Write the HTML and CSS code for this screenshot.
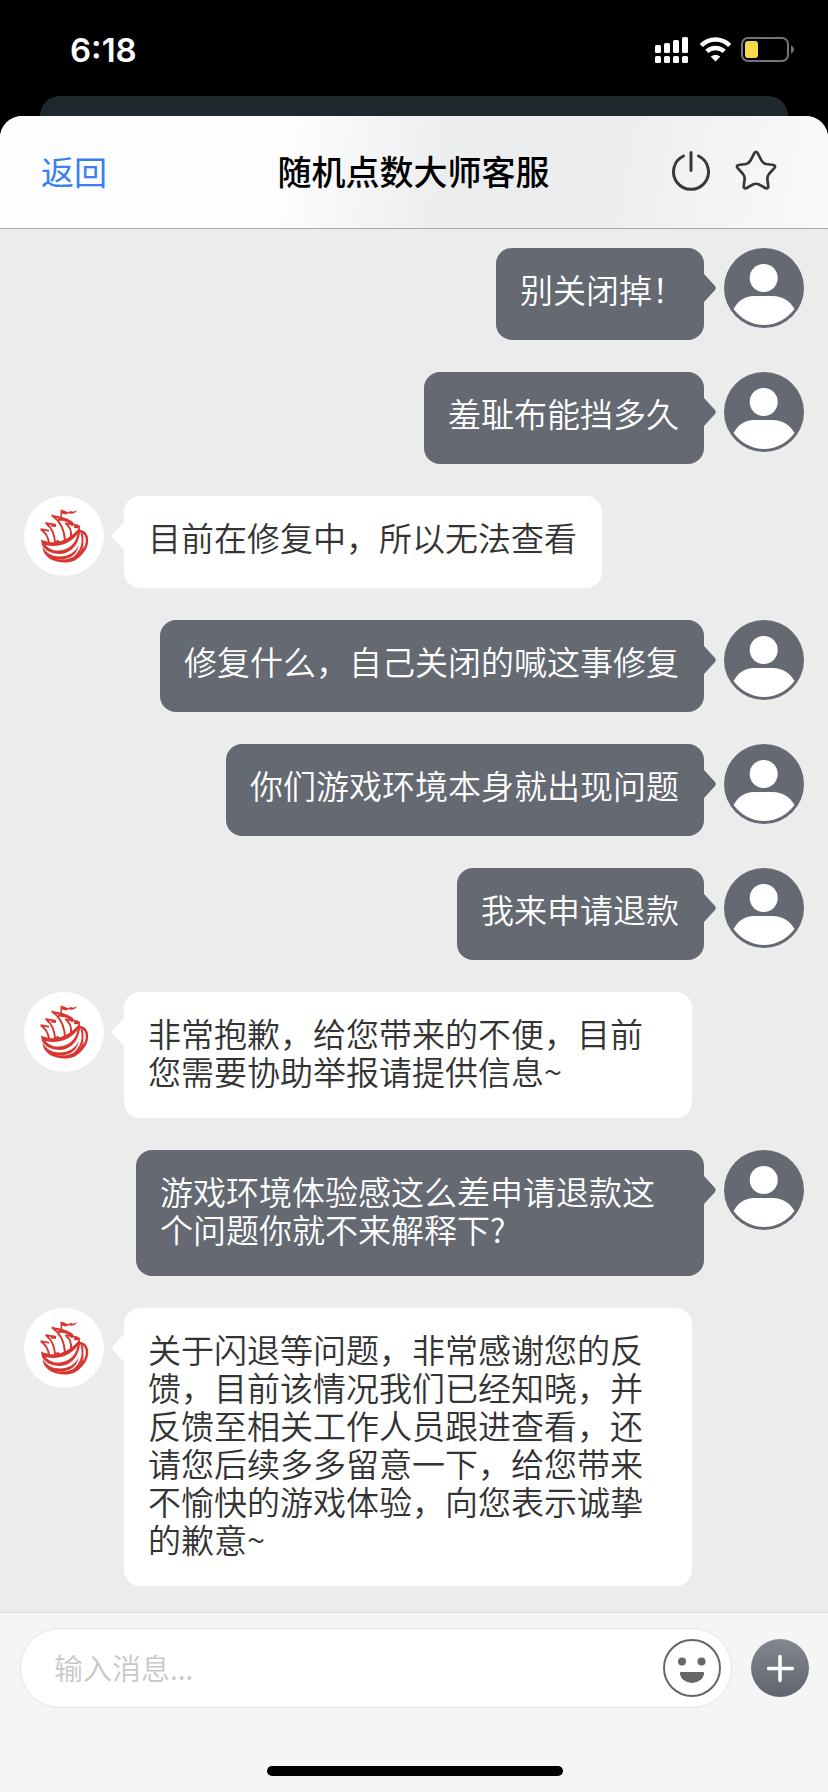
FILE: index.html
```html
<!DOCTYPE html>
<html lang="zh-CN">
<head>
<meta charset="utf-8">
<meta name="viewport" content="width=device-width, initial-scale=1">
<title>随机点数大师客服</title>
<link rel="stylesheet" href="styles.css">
</head>
<body>
<svg class="sprite" aria-hidden="true">
  <symbol id="user" viewBox="0 0 80 80">
    <circle cx="40" cy="40" r="40" fill="#656972"/>
    <circle cx="39.700" cy="30" r="14" fill="#fff"/>
    <path d="M9.500 61C14 53 21 48 30 48h19c9 0 17 5 21.500 13C63 71 52 77 40 77S17 71 9.500 61z" fill="#fff"/>
  </symbol>
  <symbol id="ship" viewBox="0 0 80 80">
    <circle cx="40" cy="40" r="40" fill="#fff"/>
    <g fill="#d93530">
      <path d="M36.500 13.500l5 1.500 2 1.200 3.500-1.200 2 .8 4.500-1.500-3 2.800-3 .7-2.500-.6-3.500 1.300-3.500-.9V21h-1.500z"/>
      <path d="M17 43.500C30 50 45 45 56 31c1 14-7 26.500-20 27-9 0-15-3.500-18-9zm4.500 5.500c3 3.500 8 6 14 5.500 10-.8 16.500-7.500 18-16.500-7 9.500-19 14-32 11z" fill-rule="evenodd"/>
      <path d="M18.500 51c4 6.500 10 9.500 17.500 9.500 9 0 15-4.500 19-11-2.500 9-9 14-19 14-4.500 0-8.500-1-12-3.500 5 3.500 11 4 16 3.500 11-1 18-7 19.500-15.500C60.500 60 52 66.500 41 66.500 28 66.500 19 60 18.500 51z"/>
    </g>
    <g fill="none" stroke="#d93530" stroke-width="1.900" stroke-linejoin="round">
      <path d="M27.500 19.300C35 22 43 21.500 49 27.500M28 19.500C36 25 40.500 34 41 45M34 23.500C40 23.500 45 25 48.500 28"/>
      <path d="M21.500 27C25 28 28.500 27.800 32 29M22 27.200C28 32 30.500 38 31 46M27 29.500l5 .5"/>
      <path d="M16.500 33.200C20 34 22.500 33.800 25 34.800M17 33.500C22.500 37.500 24.500 41.500 25 47M30.500 46l4.500-1"/>
      <path d="M41 27.500C47 27.500 52 28.500 56 31M42 28C46.500 31 47.500 35.500 47 41M48 26v4M50 31l5.500.5"/>
      <path d="M54.500 35C61 35 63.500 40 63 45.500 62 55 54 62.500 44 64.500" stroke-width="2.500"/>
      <path d="M57.500 37C60 46 58 55 49.500 62"/>
    </g>
  </symbol>
</svg>

<div class="phone">
  <div class="status">
    <span class="status__time">6:18</span>
    <svg class="status__icons" viewBox="0 0 142 30" aria-hidden="true">
      <g fill="#fff">
        <rect x="1" y="10" width="6" height="8" rx="1.500"/><rect x="10" y="8" width="6" height="10" rx="1.500"/>
        <rect x="19" y="5" width="6" height="13" rx="1.500"/><rect x="28" y="2" width="6" height="16" rx="1.500"/>
        <rect x="1" y="21" width="6" height="7" rx="1.500"/><rect x="10" y="21" width="6" height="7" rx="1.500"/>
        <rect x="19" y="21" width="6" height="7" rx="1.500"/><rect x="28" y="21" width="6" height="7" rx="1.500"/>
        <path d="M61.500 20c1.900 0 3.500.7 4.700 1.700L61.500 26.500l-4.700-4.800c1.200-1 2.800-1.700 4.700-1.700z"/>
      </g>
      <g fill="none" stroke="#fff" stroke-width="4.500">
        <path d="M47.300 10.500c8-8 20.400-8 28.400 0"/><path d="M52.800 16.300c5-4.500 12.400-4.500 17.400 0"/>
      </g>
      <rect x="88" y="3" width="46" height="23" rx="6" fill="none" stroke="#747474" stroke-width="2"/>
      <rect x="91" y="6" width="13" height="17" rx="3" fill="#f8d84a"/>
      <path d="M137 10.500c4 1.500 4 6.500 0 8z" fill="#747474"/>
    </svg>
  </div>
  <div class="backdrop"></div>
  <main class="sheet">
    <header class="bar">
      <button class="bar__back" type="button">返回</button>
      <h1 class="bar__title">随机点数大师客服</h1>
      <div class="bar__actions">
        <button class="icon" type="button" aria-label="关闭">
          <svg viewBox="0 0 44 44" fill="none" stroke="#38383a" stroke-width="3" stroke-linecap="round"><path d="M22 3.500v18M14.500 7a17.500 17.500 0 1 0 15 0"/></svg>
        </button>
        <button class="icon" type="button" aria-label="收藏">
          <svg viewBox="0 0 44 44" fill="none" stroke="#38383a" stroke-width="2.700" stroke-linejoin="round"><path d="M20.500 3.800Q22 1.800 23.500 3.800L27.500 11.500Q29 14.300 32 15L39.500 16Q42 16.800 40.500 18.800L35 25Q33 27.500 33.400 30.500L34.300 37.500Q34.200 40 31.800 39.200L25 35.500Q22 34 19 35.500L12.200 39.200Q9.800 40 9.700 37.500L10.600 30.500Q11 27.500 9 25L3.500 18.800Q2 16.800 4.500 16L12 15Q15 14.300 16.500 11.500Z"/></svg>
        </button>
      </div>
    </header>

    <section class="chat" aria-label="聊天记录">
      <div class="msg msg--me"><p class="bubble bubble--exclaim">别关闭掉！</p><svg class="avatar"><use href="#user"/></svg></div>
      <div class="msg msg--me"><p class="bubble">羞耻布能挡多久</p><svg class="avatar"><use href="#user"/></svg></div>
      <div class="msg"><svg class="avatar"><use href="#ship"/></svg><p class="bubble">目前在修复中，所以无法查看</p></div>
      <div class="msg msg--me"><p class="bubble">修复什么，自己关闭的喊这事修复</p><svg class="avatar"><use href="#user"/></svg></div>
      <div class="msg msg--me"><p class="bubble">你们游戏环境本身就出现问题</p><svg class="avatar"><use href="#user"/></svg></div>
      <div class="msg msg--me"><p class="bubble">我来申请退款</p><svg class="avatar"><use href="#user"/></svg></div>
      <div class="msg"><svg class="avatar"><use href="#ship"/></svg><p class="bubble">非常抱歉，给您带来的不便，目前您需要协助举报请提供信息~</p></div>
      <div class="msg msg--me"><p class="bubble">游戏环境体验感这么差申请退款这个问题你就不来解释下?</p><svg class="avatar"><use href="#user"/></svg></div>
      <div class="msg"><svg class="avatar"><use href="#ship"/></svg><p class="bubble">关于闪退等问题，非常感谢您的反馈，目前该情况我们已经知晓，并反馈至相关工作人员跟进查看，还请您后续多多留意一下，给您带来不愉快的游戏体验，向您表示诚挚的歉意~</p></div>
    </section>

    <footer class="composer">
      <form class="composer__row">
        <div class="field">
          <input class="field__input" type="text" placeholder="输入消息..." aria-label="输入消息">
          <button class="round" type="button" aria-label="表情">
            <svg viewBox="0 0 58 58"><circle cx="29" cy="29" r="28" fill="#fff" stroke="#666" stroke-width="2"/><circle cx="19" cy="22.500" r="4" fill="#666"/><circle cx="38.500" cy="22.500" r="4" fill="#666"/><path d="M18 33h22q1 0 1 1a12 10 0 0 1-24 0q0-1 1-1z" fill="#666"/></svg>
          </button>
        </div>
        <button class="round" type="button" aria-label="更多">
          <svg viewBox="0 0 58 58"><defs><linearGradient id="plus" x2="0" y2="1"><stop stop-color="#83878f"/><stop offset="1" stop-color="#60646e"/></linearGradient></defs><circle cx="29" cy="29" r="29" fill="url(#plus)"/><path d="M29 17.500v24M17.500 29.500h24" stroke="#fff" stroke-width="3.500" stroke-linecap="round"/></svg>
        </button>
      </form>
      <div class="home"></div>
    </footer>
  </main>
</div>
</body>
</html>
```

FILE: styles.css
```css
* { box-sizing: border-box; }

body {
  margin: 0;
  background: #000;
  font-family: "Noto Sans CJK SC", sans-serif;
}

button {
  padding: 0;
  border: 0;
  background: none;
  font: inherit;
  cursor: pointer;
}

svg { display: block; }

.sprite { position: absolute; width: 0; height: 0; }

.phone {
  display: flex;
  flex-direction: column;
  min-height: 100vh;
}

/* Status bar */
.status {
  display: flex;
  align-items: center;
  justify-content: space-between;
  height: 96px;
  padding: 4px 32px 0 70px;
}

.status__time {
  color: #fff;
  font: 600 33px/40px Inter, sans-serif;
}

.status__icons { width: 142px; height: 30px; }

/* Sheet behind the chat */
.backdrop {
  height: 40px;
  margin: 0 40px -20px;
  border-radius: 20px 20px 0 0;
  background: #1f292d;
}

.sheet {
  position: relative;
  display: flex;
  flex: 1;
  flex-direction: column;
  overflow: hidden;
  border-radius: 22px 22px 0 0;
  background: #ececec;
}

/* Header */
.bar {
  display: grid;
  grid-template-columns: 1fr auto 1fr;
  align-items: center;
  height: 113px;
  padding: 0 50px 2px 41px;
  border-bottom: 1px solid #a5a5a7;
  background: linear-gradient(100deg, #fdfdfd 35%, #ecedef 54%, #ecedef 72%, #fafafb 100%);
}

.bar__back {
  justify-self: start;
  color: #3a7ff0;
  font-size: 33px;
  line-height: 40px;
}

.bar__title {
  margin: 0 0 0 8px;
  color: #000;
  font-size: 34px;
  font-weight: 500;
  line-height: 40px;
}

.bar__actions {
  display: flex;
  gap: 21px;
  justify-self: end;
}

.icon, .icon svg { width: 44px; height: 44px; }

/* Messages */
.chat {
  display: flex;
  flex: 1;
  flex-direction: column;
  gap: 32px;
  padding: 19px 24px 26px;
}

.msg {
  display: flex;
  align-items: flex-start;
  gap: 20px;
}

.msg--me { justify-content: flex-end; }

.avatar {
  flex: none;
  width: 80px;
  height: 80px;
}

.bubble {
  position: relative;
  max-width: calc(100% - 212px);
  min-height: 92px;
  margin: 0;
  padding: 22px 25px 28px 24px;
  border-radius: 16px;
  background: #fff;
  color: #333;
  font-family: "Noto Sans CJK SC DemiLight", "Noto Sans CJK SC", sans-serif;
  font-size: 33px;
  font-weight: 350;
  line-height: 38px;
}

.bubble::before {
  content: "";
  position: absolute;
  top: 26px;
  right: 100%;
  width: 12px;
  height: 28px;
  background: inherit;
  clip-path: polygon(100% 0, 10% 42%, 0 50%, 10% 58%, 100% 100%);
}

.msg--me .bubble {
  background: #656972;
  color: #fff;
}

.msg--me .bubble::before {
  right: auto;
  left: 100%;
  clip-path: polygon(0 0, 90% 42%, 100% 50%, 90% 58%, 0 100%);
}

/* The full-width mark leaves blank space on its right */
.bubble--exclaim { padding-right: 19px; }

/* Composer */
.composer {
  display: flex;
  flex-direction: column;
  justify-content: space-between;
  height: 180px;
  padding: 15px 19px 16px 20px;
  border-top: 1px solid #dedede;
  background: #f5f5f5;
}

.composer__row {
  display: flex;
  align-items: center;
  gap: 19px;
}

.field {
  display: flex;
  flex: 1;
  align-items: center;
  height: 80px;
  padding: 0 10px 0 33px;
  border: 1px solid #e3e3e5;
  border-radius: 40px;
  background: #fff;
}

.field__input {
  flex: 1;
  min-width: 0;
  padding: 0 0 2px;
  border: 0;
  outline: 0;
  background: none;
  color: #333;
  font: 350 29px/40px "Noto Sans CJK SC DemiLight", "Noto Sans CJK SC", sans-serif;
}

.field__input::placeholder { color: #c8c8c8; }

.round, .round svg {
  flex: none;
  width: 58px;
  height: 58px;
}

.home {
  width: 296px;
  height: 10px;
  margin: 0 auto;
  border-radius: 5px;
  background: #000;
}
```
